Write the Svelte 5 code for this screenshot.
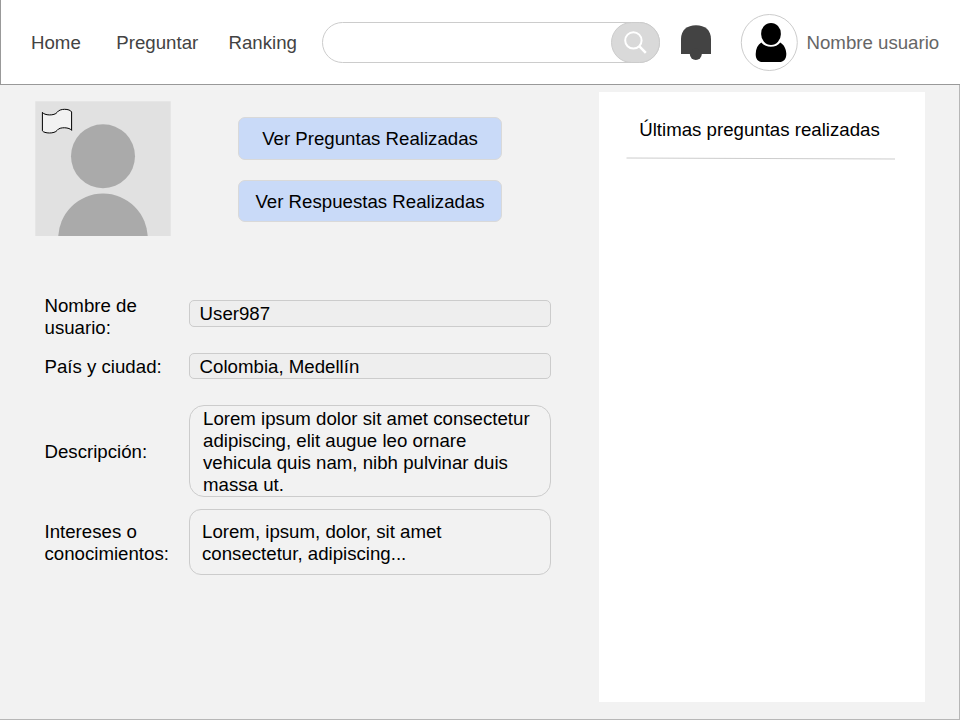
<script>
  const links = ['Home', 'Preguntar', 'Ranking'];
  const actions = ['Ver Preguntas Realizadas', 'Ver Respuestas Realizadas'];
  const fields = [
    { kind: 'name', label: 'Nombre de usuario:', value: 'User987' },
    { kind: 'place', label: 'País y ciudad:', value: 'Colombia, Medellín' },
    {
      kind: 'about',
      label: 'Descripción:',
      value: 'Lorem ipsum dolor sit amet consectetur adipiscing, elit augue leo ornare vehicula quis nam, nibh pulvinar duis massa ut.'
    },
    {
      kind: 'interests',
      label: 'Intereses o conocimientos:',
      value: 'Lorem, ipsum, dolor, sit amet consectetur, adipiscing...'
    }
  ];
</script>

<div class="page">
  <header>
    <nav>
      {#each links as link}
        <a href="#{link}">{link}</a>
      {/each}
    </nav>
    <div class="search">
      <button class="search-button" aria-label="Buscar">
        <svg width="49" height="41" viewBox="0 0 49 41" fill="none" stroke="#fff" stroke-width="2">
          <circle cx="22.4" cy="18.4" r="8.2" />
          <path d="M28.2 24.1L34.8 30.8" stroke-width="2.5" />
        </svg>
      </button>
    </div>
    <svg class="bell" width="30" height="36" viewBox="0 0 30 36" fill="#434343">
      <path d="M0 29V14C0 5.2 6 0.2 15 0.2S30 5.2 30 14V29Z" />
      <ellipse cx="14.8" cy="29" rx="6" ry="6" />
    </svg>
    <svg class="avatar" width="58" height="58" viewBox="0 0 58 58">
      <circle cx="29.3" cy="28.5" r="28" fill="#fff" stroke="#ccc" />
      <ellipse cx="31" cy="19.9" rx="9.9" ry="11" />
      <path d="M21.3 28.4C23.3 31.1 26.8 32.7 30.8 32.7S38.3 31.1 40.3 28.4C43.8 30.5 46.1 34.5 46.3 39.5C46.5 45 43.8 48.1 39.3 48.1H22.8C17.8 48.1 15.6 45 15.7 40C15.8 34.5 17.8 30.5 21.3 28.4Z" />
    </svg>
    <span class="username">Nombre usuario</span>
  </header>

  <main>
    <section class="profile">
      <div class="top">
        <svg class="photo" width="136" height="135" viewBox="0 0 136 135">
          <rect x="0.3" y="0.3" width="135.4" height="134.7" fill="#e1e1e1" />
          <circle cx="68" cy="55.2" r="32" fill="#aaa" />
          <circle cx="68" cy="137.4" r="44.8" fill="#aaa" />
          <path
            d="M7.4 11.3C9 14.5 19.5 15.1 22.2 11.3C24.5 7.2 35 7.5 36.6 11V29.4C35 26.3 24.5 25.5 22.2 29.3C19.5 33.1 9 32.5 7.4 29.8Z"
            fill="#f2f2f2" stroke="#000" />
        </svg>
        <div class="actions">
          {#each actions as action}
            <button class="action">{action}</button>
          {/each}
        </div>
      </div>
      <div class="fields">
        {#each fields as field}
          <div class="row {field.kind}">
            <div class="label">{field.label}</div>
            <div class="value">{field.value}</div>
          </div>
        {/each}
      </div>
    </section>

    <aside>
      <h2>Últimas preguntas realizadas</h2>
      <svg width="270" height="3" viewBox="0 0 270 3">
        <path d="M0.5 1L269 2" stroke="#ccc" />
      </svg>
    </aside>
  </main>
</div>

<style>
  :global(body) {
    margin: 0;
  }
  .page {
    box-sizing: border-box;
    width: 960px;
    height: 720px;
    display: flex;
    flex-direction: column;
    overflow: hidden;
    background: #f2f2f2;
    color: #000;
    font: 18.667px/22px "Liberation Sans", Arial, sans-serif;
  }
  svg {
    display: block;
    flex: none;
  }
  button {
    font: inherit;
    color: inherit;
    padding: 0;
    cursor: pointer;
  }
  header {
    box-sizing: border-box;
    height: 85px;
    flex: none;
    display: flex;
    align-items: center;
    background: #fff;
    border-left: 1px solid #999;
    border-bottom: 1px solid #999;
  }
  nav {
    display: flex;
    width: 291px;
    margin-left: 30px;
    padding-top: 1px;
  }
  nav a {
    color: #434343;
    text-decoration: none;
  }
  nav a:first-child {
    width: 85.3px;
  }
  nav a:nth-child(2) {
    width: 112.2px;
  }
  .search {
    box-sizing: border-box;
    display: flex;
    justify-content: flex-end;
    width: 338px;
    height: 41px;
    border: 1px solid #ccc;
    border-radius: 20.5px;
    margin-top: 1px;
  }
  .search-button {
    flex: none;
    box-sizing: border-box;
    width: 49px;
    height: 41px;
    margin: -1px;
    border: 1px solid #ccc;
    border-radius: 20.5px;
    background: #d9d9d9;
  }
  .search-button svg {
    margin: -1px;
  }
  .bell {
    margin: 1px 29px 0 21px;
  }
  .avatar {
    margin: 1px 8.5px 0 0;
  }
  .username {
    color: #666;
    white-space: nowrap;
    padding-top: 1px;
  }
  main {
    box-sizing: border-box;
    flex: 1;
    display: flex;
    border-right: 1px solid #b7b7b7;
    border-bottom: 1px solid #b7b7b7;
  }
  .profile {
    width: 599px;
    flex: none;
  }
  .top {
    display: flex;
    padding: 16px 0 0 35px;
    height: 135px;
  }
  .actions {
    display: flex;
    flex-direction: column;
    gap: 20px;
    margin: 16px 0 0 67px;
  }
  .action {
    box-sizing: border-box;
    width: 264px;
    height: 43px;
    padding-top: 1px;
    background: #c9daf8;
    border: 1px solid #d9d9d9;
    border-radius: 7px;
  }
  .action:last-child {
    height: 42px;
    padding-top: 2px;
  }
  .fields {
    padding: 59px 0 0 44.5px;
  }
  .row {
    display: flex;
    align-items: center;
  }
  .label {
    width: 144.5px;
    padding-right: 15px;
    box-sizing: border-box;
    flex: none;
  }
  .value {
    box-sizing: border-box;
    width: 362px;
    display: flex;
    align-items: center;
    border: 1px solid #ccc;
  }
  .name,
  .place {
    height: 44px;
  }
  .name .value,
  .place .value {
    padding: 1px 0 0 9.6px;
    background: #eee;
    border-radius: 5px;
  }
  .name {
    align-items: flex-start;
  }
  .name .value {
    height: 27px;
    margin-top: 5px;
  }
  .place {
    margin-top: 5px;
  }
  .place .value {
    height: 26px;
  }
  .place .label {
    padding-top: 1px;
  }
  .about .label,
  .interests .label {
    padding-top: 2px;
  }
  .about {
    margin-top: 17px;
  }
  .about .value {
    height: 92px;
    padding: 2px 13px 0;
    border-radius: 15px;
  }
  .interests {
    margin-top: 12px;
  }
  .interests .value {
    height: 66px;
    padding: 2px 90px 0 12px;
    border-radius: 12px;
  }
  aside {
    width: 326px;
    height: 610px;
    margin-top: 7px;
    background: #fff;
    display: flex;
    flex-direction: column;
    align-items: center;
  }
  aside svg {
    margin-right: 2px;
  }
  h2 {
    font: inherit;
    margin: 27px 5px 15.5px 0;
  }
</style>
